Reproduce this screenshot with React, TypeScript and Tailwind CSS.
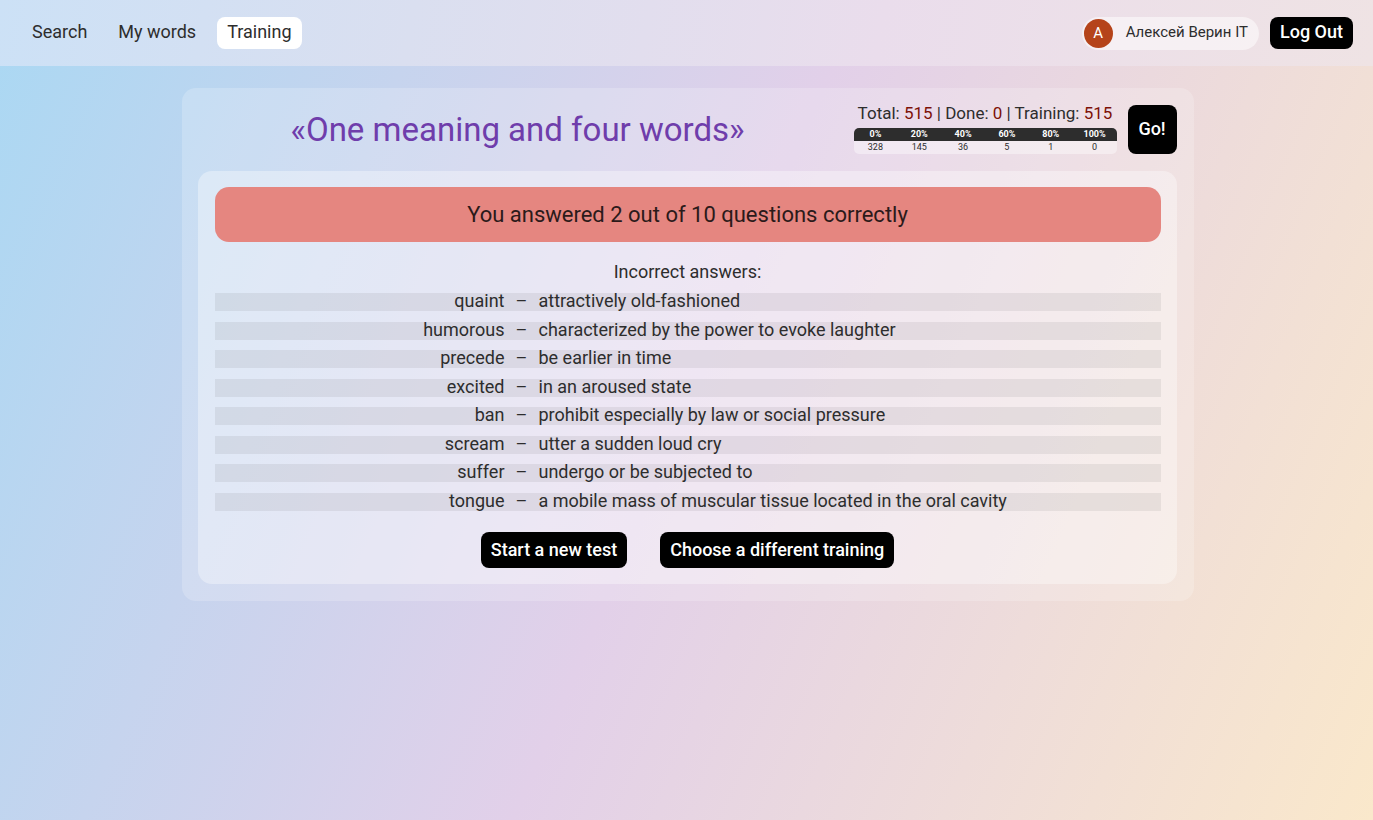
const navLinks = [
  { label: 'Search', active: false },
  { label: 'My words', active: false },
  { label: 'Training', active: true },
];

const progress = [
  { label: '0%', count: 328 },
  { label: '20%', count: 145 },
  { label: '40%', count: 36 },
  { label: '60%', count: 5 },
  { label: '80%', count: 1 },
  { label: '100%', count: 0 },
];

const mistakes = [
  { word: 'quaint', meaning: 'attractively old-fashioned' },
  { word: 'humorous', meaning: 'characterized by the power to evoke laughter' },
  { word: 'precede', meaning: 'be earlier in time' },
  { word: 'excited', meaning: 'in an aroused state' },
  { word: 'ban', meaning: 'prohibit especially by law or social pressure' },
  { word: 'scream', meaning: 'utter a sudden loud cry' },
  { word: 'suffer', meaning: 'undergo or be subjected to' },
  { word: 'tongue', meaning: 'a mobile mass of muscular tissue located in the oral cavity' },
];

function Header() {
  return (
    <header className="flex items-start justify-between bg-[linear-gradient(100deg,#cce1f6_0%,#dadff0_30%,#eaddec_64%,#efe3e4_100%)] pt-[17px] pr-5 pb-4 pl-[22px]">
      <nav className="flex gap-[11px]">
        {navLinks.map((link) => (
          <a
            key={link.label}
            href="#"
            className={
              link.active
                ? 'rounded-lg bg-white px-2.5 leading-[30px] pb-0.5'
                : 'rounded-lg px-2.5 leading-[30px] pb-0.5'
            }
          >
            {link.label}
          </a>
        ))}
      </nav>
      <div className="flex items-start gap-[11px]">
        <div className="flex h-[33px] items-center gap-[13px] rounded-full bg-white/50 pr-[11px] pl-0.5 text-[15px]">
          <span className="flex size-[29px] items-center justify-center rounded-full bg-[#b5431a] text-[15px] text-white">
            A
          </span>
          <span className="pb-0.5">Алексей Верин IT</span>
        </div>
        <button type="button" className="rounded-lg bg-black px-2.5 pb-0.5 leading-[30px] font-medium text-white">
          Log Out
        </button>
      </div>
    </header>
  );
}

function Stats() {
  return (
    <div className="w-[263px] shrink-0">
      <p className="text-center text-[17px] leading-4 whitespace-nowrap">
        Total: <span className="text-[#7d1007]">515</span> | Done: <span className="text-[#7d1007]">0</span> |
        Training: <span className="text-[#7d1007]">515</span>
      </p>
      <div className="mt-[7px] overflow-hidden rounded-[5px]">
        <table className="w-full table-fixed border-collapse text-center text-[9px] leading-[13px]">
          <thead className="bg-[#2d2d2d] text-white">
            <tr>
              {progress.map((step) => (
                <th key={step.label} scope="col" className="p-0 font-bold">
                  {step.label}
                </th>
              ))}
            </tr>
          </thead>
          <tbody className="bg-white/40">
            <tr>
              {progress.map((step) => (
                <td key={step.label} className="p-0">
                  {step.count}
                </td>
              ))}
            </tr>
          </tbody>
        </table>
      </div>
    </div>
  );
}

function Results() {
  return (
    <section className="rounded-[14px] bg-white/35 py-4 pr-4 pl-[17px]">
      <h2 className="rounded-[14px] bg-[#e58680] text-center text-[22px] leading-[55px] text-[#2b1a1a]">
        You answered 2 out of 10 questions correctly
      </h2>
      <p className="mt-5 text-center leading-5">Incorrect answers:</p>
      <ul className="mt-[11px] flex min-h-[218px] flex-col justify-between">
        {mistakes.map((item) => (
          <li
            key={item.word}
            className="grid grid-cols-[minmax(0,290px)_12px_1fr] gap-x-[11px] bg-[#2d2d2d]/8 pb-0.5 leading-4"
          >
            <span className="text-right">{item.word}</span>
            <span className="text-center">–</span>
            <span>{item.meaning}</span>
          </li>
        ))}
      </ul>
      <div className="mt-[21px] flex justify-center gap-[33px]">
        <button type="button" className="rounded-lg bg-black px-2.5 leading-9 font-medium text-white">
          Start a new test
        </button>
        <button type="button" className="rounded-lg bg-black px-2.5 leading-9 font-medium text-white">
          Choose a different training
        </button>
      </div>
    </section>
  );
}

export default function App() {
  return (
    <div className="min-h-screen bg-[linear-gradient(113deg,#aad8f3_0%,#e2d0e9_50%,#fae8cb_100%)] font-[Roboto,sans-serif] text-[18px] text-[#2d2d2d]">
      <Header />
      <main className="flex justify-center pt-[22px] pr-5 pl-[22px]">
        <div className="w-full max-w-[1012px] rounded-[14px] bg-white/20 py-[17px] pr-[17px] pl-4">
          <div className="mb-[17px] flex items-start">
            <h1 className="mr-4 flex-1 text-center text-[33px] leading-[49px] text-[#6f3dab]">
              «One meaning and four words»
            </h1>
            <Stats />
            <button
              type="button"
              className="ml-[11px] size-[49px] shrink-0 rounded-lg bg-black pb-0.5 font-medium text-white"
            >
              Go!
            </button>
          </div>
          <Results />
        </div>
      </main>
    </div>
  );
}
